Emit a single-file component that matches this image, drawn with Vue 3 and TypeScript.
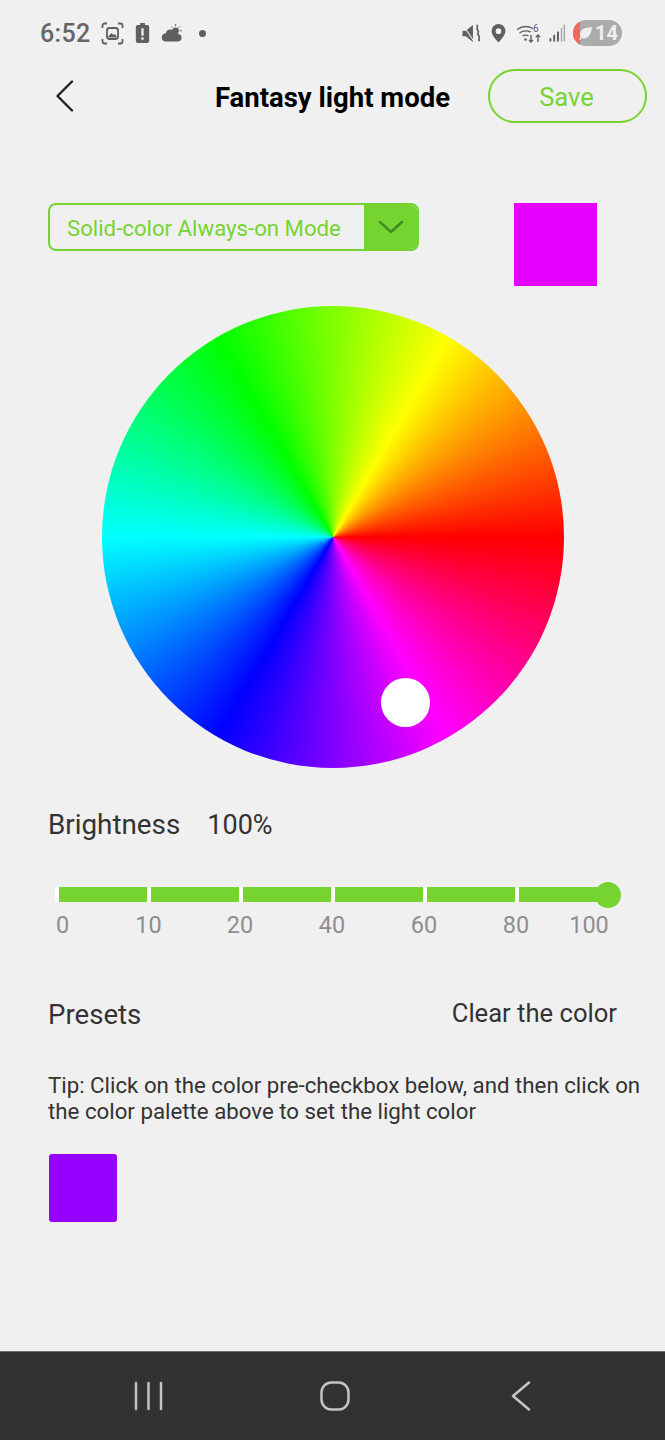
<script setup lang="ts">
const segments = [0, 1, 2, 3, 4, 5]
const ticks = ['0', '10', '20', '40', '60', '80', '100']
</script>

<template>
  <div class="screen">
    <div class="status">
      <div class="status-left">
        <span class="time">6:52</span>
        <svg class="ic" width="23" height="23" viewBox="0 0 23 23" fill="none" stroke="#5f5f5f" stroke-width="1.8">
          <path d="M1.5 6V3.5a2 2 0 0 1 2-2H6M17 1.5h2.5a2 2 0 0 1 2 2V6M21.5 17v2.5a2 2 0 0 1-2 2H17M6 21.5H3.5a2 2 0 0 1-2-2V17" />
          <rect x="6" y="6" width="11" height="11" rx="2.5" />
          <path d="M7.5 14l3-3 2 2 1-1 2 2v1.5h-8z" fill="#5f5f5f" stroke="none" />
        </svg>
        <svg class="ic" width="15" height="20" viewBox="0 0 15 21">
          <path fill="#5f5f5f" fill-rule="evenodd" d="M5 0h5v2h2.5A2 2 0 0 1 14.5 4v15a2 2 0 0 1-2 2h-10a2 2 0 0 1-2-2V4a2 2 0 0 1 2-2H5zM6.3 5.5v8h2.4v-8zM6.3 15v2.5h2.4V15z" />
        </svg>
        <svg class="ic" width="22" height="18" viewBox="0 0 23 20">
          <path fill="#5f5f5f" d="M5 19.5a4.5 4.5 0 0 1-.6-9A6 6 0 0 1 15.5 9.5a3.2 3.2 0 0 1 2.7 1.300 4.4 4.4 0 0 1 .3 8.700z" />
          <circle cx="15.5" cy="7.5" r="3.6" fill="#5f5f5f" />
          <path stroke="#5f5f5f" stroke-width="1" d="M15.5 0v2.5M20.5 2.5l-1.6 1.6M22.5 7.5H20M10.5 2.5l1.6 1.6" />
        </svg>
        <span class="dot"></span>
      </div>
      <div class="status-right">
        <svg class="i-mute" width="20" height="19" viewBox="0 0 20 20">
          <path fill="#5f5f5f" d="M0 7h3.500L11 1v18L3.500 13H0z" />
          <path d="M0.500 1l12 18" stroke="#f0f0f0" stroke-width="1.200" />
          <path d="M15 1c2.500 2-1.500 3.500 1 5.500s-1.500 3.500 1 5.500-1.500 3 1 6" fill="none" stroke="#5f5f5f" stroke-width="1.800" />
        </svg>
        <svg class="i-pin" width="15" height="19" viewBox="0 0 15 20">
          <path fill="#5f5f5f" fill-rule="evenodd" d="M7.500 0A7.300 7.300 0 0 1 14.800 7.300C14.800 12 9.500 17 7.500 19.500 5.500 17 .2 12 .2 7.300A7.300 7.300 0 0 1 7.500 0zM7.500 4.500a3 3 0 1 0 0 6 3 3 0 0 0 0-6z" />
        </svg>
        <svg class="i-wifi" width="27" height="21" viewBox="0 0 27 21" fill="none" stroke="#5f5f5f" stroke-width="1.400">
          <path d="M1 6.500a15 15 0 0 1 16-1M3.500 10a11 11 0 0 1 11-1M6.500 13a6 6 0 0 1 6 0" />
          <circle cx="9.500" cy="16.500" r="1.300" fill="#5f5f5f" stroke="none" />
          <path d="M15 12v7M13 17l2 2 2-2M22 19v-7M20 14l2-2 2 2" />
          <text x="17" y="8.500" font-size="10" fill="#5f5f5f" stroke="none" font-family="Roboto, sans-serif">6</text>
        </svg>
        <svg class="i-signal" width="17" height="18" viewBox="0 0 17 19">
          <rect x="0" y="15" width="2" height="3.500" fill="#5f5f5f" />
          <rect x="4" y="11.500" width="2" height="7" fill="#5f5f5f" />
          <rect x="8" y="8" width="2" height="10.500" fill="#5f5f5f" />
          <rect x="12" y="4" width="1.500" height="14.500" fill="#a9a9a9" />
          <rect x="15" y="0.500" width="1.500" height="18" fill="#a9a9a9" />
        </svg>
        <div class="battery">
          <span class="battery-red"></span>
          <svg class="leaf" width="15" height="15" viewBox="0 0 15 15">
            <path fill="#efefef" d="M14 1C8 1.500 2.500 2.500 2 8c-.1 1.500.3 2.500.8 3L1 13.500l1 .7L4 12c1 .5 2.300.6 3.500.2C12 11 13.500 6 14 1z" />
          </svg>
          <span class="battery-num">14</span>
        </div>
      </div>
    </div>

    <header class="header">
      <svg class="back" width="20" height="32" viewBox="0 0 20 32" fill="none" stroke="#222" stroke-width="2.400" stroke-linecap="round" stroke-linejoin="round">
        <path d="M17 1.500 2.500 16 17 30.500" />
      </svg>
      <h1 class="title">Fantasy light mode</h1>
      <button class="save"><span class="save-text">Save</span></button>
    </header>

    <div class="mode-row">
      <div class="select">
        <span class="select-text">Solid-color Always-on Mode</span>
        <span class="select-arrow">
          <svg width="26" height="15" viewBox="0 0 26 15" fill="none" stroke="#3f8a25" stroke-width="2.400" stroke-linecap="round" stroke-linejoin="round">
            <path d="M2 2l11 10L24 2" />
          </svg>
        </span>
      </div>
      <div class="swatch"></div>
    </div>

    <div class="wheel-wrap">
      <div class="wheel">
        <span class="thumb"></span>
      </div>
    </div>

    <div class="bright-row">
      <span class="bright-label">Brightness</span>
      <span>100%</span>
    </div>

    <div class="track">
      <span v-for="s in segments" :key="s" class="seg"></span>
      <span class="knob"></span>
    </div>
    <div class="ticks">
      <span v-for="t in ticks" :key="t" class="tick">{{ t }}</span>
    </div>

    <div class="presets-row">
      <span>Presets</span>
      <span class="clear">Clear the color</span>
    </div>

    <p class="tip">Tip: Click on the color pre-checkbox below, and then click on the color palette above to set the light color</p>

    <div class="preset"></div>

    <div class="spacer"></div>

    <nav class="navbar">
      <svg width="30" height="30" viewBox="0 0 30 30" stroke="#c4c4c4" stroke-width="2.500" stroke-linecap="round">
        <path d="M2 2v26M14.500 2v26M27 2v26" />
      </svg>
      <svg class="nav-home" width="30" height="30" viewBox="0 0 30 30" fill="none" stroke="#c4c4c4" stroke-width="2.500">
        <rect x="1.500" y="1.500" width="27" height="27" rx="10" />
      </svg>
      <svg class="nav-back" width="20" height="30" viewBox="0 0 20 30" fill="none" stroke="#c4c4c4" stroke-width="2.500" stroke-linecap="round" stroke-linejoin="round">
        <path d="M18 1.500 2 15l16 13.500" />
      </svg>
    </nav>
  </div>
</template>

<style>
html, body { margin: 0; background: #f0f0f0; }
</style>

<style scoped>
.screen {
  width: 665px;
  height: 1440px;
  background: #f0f0f0;
  display: flex;
  flex-direction: column;
  font-family: Roboto, "Liberation Sans", sans-serif;
  color: #333;
  overflow: hidden;
}
.status {
  height: 66px;
  padding: 0 43px 0 40px;
  display: flex;
  justify-content: space-between;
  align-items: center;
  box-sizing: border-box;
}
.status-left, .status-right { display: flex; align-items: center; }
.time { font-size: 25px; font-weight: 500; color: #666; letter-spacing: .3px; margin-right: 11px; }
.status-left .ic { margin-right: 11px; }
.dot { width: 7px; height: 7px; border-radius: 50%; background: #5f5f5f; margin-left: 5px; }
.i-pin { margin-left: 9px; }
.i-wifi { margin-left: 10px; }
.i-signal { margin-left: 6px; }
.battery {
  position: relative;
  width: 49px;
  height: 26px;
  margin-left: 7px;
  border-radius: 13px;
  background: #ababab;
  overflow: hidden;
  display: flex;
  align-items: center;
  padding-left: 5px;
  box-sizing: border-box;
}
.battery-red { position: absolute; left: 0; top: 0; bottom: 0; width: 7px; background: #f4675d; }
.leaf { position: relative; }
.battery-num { position: relative; color: #efefef; font-weight: 700; font-size: 20px; margin-left: 2px; }
.header {
  position: relative;
  height: 62px;
  display: flex;
  align-items: center;
  justify-content: space-between;
  padding: 0 18px 0 55px;
}
.back { margin-bottom: 2px; }
.title {
  position: absolute;
  left: 0;
  right: 0;
  margin: 0;
  text-align: center;
  font-size: 27.500px;
  font-weight: 700;
  color: #000;
  pointer-events: none;
}
.save {
  width: 159px;
  height: 54px;
  margin-bottom: 3px;
  border: 2px solid #76d431;
  border-radius: 27px;
  background: transparent;
  color: #76d431;
  font: 400 25.500px Roboto, sans-serif;
  padding: 2px 2px 0 0;
}
.mode-row {
  margin-top: 75px;
  padding: 0 68px 0 48px;
  display: flex;
  justify-content: space-between;
  align-items: flex-start;
}
.select {
  width: 371px;
  height: 48px;
  display: flex;
  border: 2px solid #76d431;
  border-radius: 8px;
  box-sizing: border-box;
  overflow: hidden;
}
.select-text {
  flex: 1;
  color: #76d431;
  font-size: 22.200px;
  line-height: 47px;
  padding-left: 17px;
}
.select-arrow {
  width: 53px;
  background: #76d431;
  display: flex;
  align-items: center;
  justify-content: center;
}
.swatch { width: 83px; height: 83px; background: #e600ff; }
.wheel-wrap {
  margin-top: 20px;
  display: flex;
  justify-content: center;
}
.wheel {
  position: relative;
  width: 462px;
  height: 462px;
  border-radius: 50%;
  background: conic-gradient(from 90deg, #f00, #f0f 60deg, #00f 120deg, #0ff 180deg, #0f0 240deg, #ff0 300deg, #f00 360deg);
}
.thumb {
  position: absolute;
  left: 279px;
  top: 372px;
  width: 49px;
  height: 49px;
  border-radius: 50%;
  background: #fff;
}
.bright-row {
  margin-top: 40px;
  padding-left: 48px;
  display: flex;
  gap: 27px;
  font-size: 27px;
  line-height: 34px;
}
.bright-label { font-size: 27.800px; }
.track {
  position: relative;
  margin: 45px 0 0 55px;
  width: 553px;
  height: 15px;
  display: flex;
}
.seg {
  width: 88px;
  height: 15px;
  background: #76d431;
  border-left: 4px solid #fff;
}
.knob {
  position: absolute;
  right: -13px;
  top: -5px;
  width: 26px;
  height: 26px;
  border-radius: 50%;
  background: #76d431;
}
.ticks {
  margin-top: 9px;
  padding-left: 48px;
  display: grid;
  grid-template-columns: 55px 91px repeat(4, 92px) 54px;
  color: #8e8e8e;
  font-size: 23.500px;
  line-height: 28px;
}
.tick { text-align: center; }
.tick:first-child { text-align: left; padding-left: 8px; }
.tick:last-child { white-space: nowrap; }
.presets-row {
  margin-top: 60px;
  padding: 0 48px;
  display: flex;
  justify-content: space-between;
  align-items: flex-start;
  font-size: 27.600px;
  line-height: 32px;
}
.clear { font-size: 25.600px; line-height: 28px; }
.tip {
  margin: 41px 0 0;
  padding: 0 20px 0 48px;
  font-size: 22.270px;
  line-height: 26px;
  color: #333;
}
.preset {
  margin: 30px 0 0 49px;
  width: 68px;
  height: 68px;
  border-radius: 3px;
  background: #9600ff;
}
.spacer { flex: 1; }
.navbar {
  height: 88px;
  flex: none;
  background: #323232;
  border-top: 1px solid #6a6a6a;
  display: flex;
  align-items: center;
  padding-left: 134px;
}
.nav-home { margin-left: 156px; }
.nav-back { margin-left: 161px; }
</style>
